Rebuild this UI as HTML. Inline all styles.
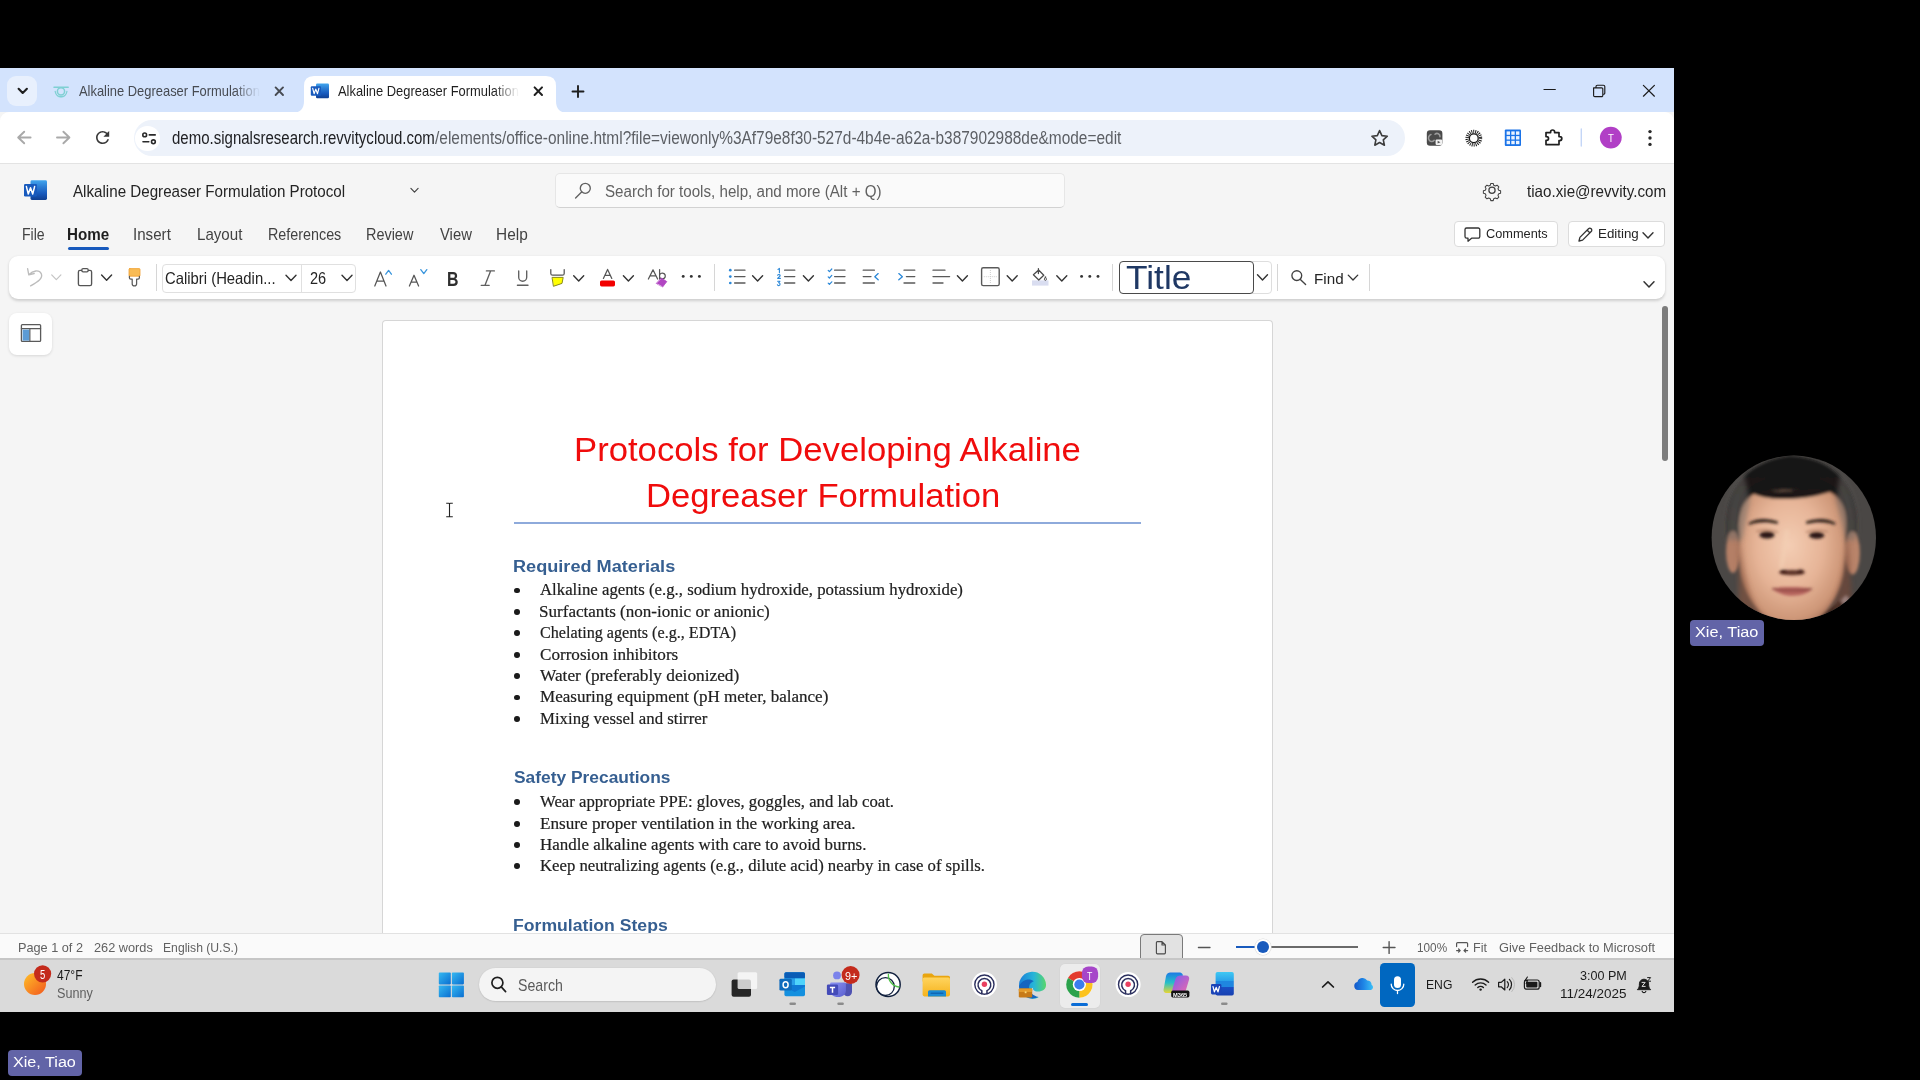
<!DOCTYPE html>
<html lang="en">
<head>
<meta charset="utf-8">
<title>Alkaline Degreaser Formulation Protocol</title>
<style>
html,body{margin:0;padding:0;background:#000;font-family:"Liberation Sans",sans-serif;}
body{width:1920px;height:1080px;overflow:hidden;font-family:"Liberation Sans",sans-serif;}
#root{position:relative;width:1920px;height:1080px;overflow:hidden;background:#000;}
.a{position:absolute;}
.t{position:absolute;white-space:nowrap;line-height:1;transform-origin:0 0;font-family:"Liberation Sans",sans-serif;}
svg{position:absolute;overflow:visible;}
.bul{position:absolute;width:5.8px;height:5.8px;border-radius:50%;background:#1a1a1a;left:514.3px;margin-top:.3px;}
.sep{position:absolute;width:1px;background:#d6d6d6;top:264px;height:27px;}
</style>
</head>
<body>
<div id="root">
<!-- ===== browser window backgrounds ===== -->
<div class="a" style="left:0;top:68px;width:1674px;height:944px;background:#f5f5f5;"></div>
<!-- tab strip -->
<div class="a" style="left:0;top:68px;width:1674px;height:44px;background:#d3e3fd;"></div>
<!-- toolbar -->
<div class="a" style="left:0;top:112px;width:1674px;height:51px;background:#fff;border-bottom:1px solid #e3e3e3;border-radius:9px 9px 0 0;"></div>
<!-- tab search button -->
<div class="a" style="left:7px;top:76px;width:30px;height:29.6px;border-radius:9px;background:#e8f0fd;"></div>
<!-- active tab -->
<svg style="left:292px;top:75px" width="276" height="38" viewBox="0 0 276 38"><path d="M0 38 C8 38 12 34 12 26 L12 11 Q12 1 22 1 L254 1 Q264 1 264 11 L264 26 C264 34 268 38 276 38 Z" fill="#fff"/></svg>
<!-- omnibox -->
<div class="a" style="left:134px;top:120px;width:1271px;height:36px;border-radius:18px;background:#edf2fa;"></div>
<div class="a" style="left:135px;top:126px;width:24.5px;height:24.5px;border-radius:50%;background:#fff;"></div>

<!-- ===== Word app ===== -->
<!-- search box -->
<div class="a" style="left:555px;top:172.5px;width:510px;height:35px;border-radius:5px;background:#fafafa;border:1px solid #e6e6e6;border-bottom-color:#d2d2d2;box-sizing:border-box;"></div>
<!-- Home underline -->
<div class="a" style="left:67.5px;top:246.5px;width:41.5px;height:3px;border-radius:1.5px;background:#185abd;"></div>
<!-- comments / editing buttons -->
<div class="a" style="left:1454px;top:221px;width:103.5px;height:25.5px;border-radius:4px;background:#fff;border:1px solid #dcdcdc;box-sizing:border-box;"></div>
<div class="a" style="left:1567.5px;top:221px;width:97.5px;height:25.5px;border-radius:4px;background:#fff;border:1px solid #dcdcdc;box-sizing:border-box;"></div>
<!-- ribbon -->
<div class="a" style="left:9px;top:256px;width:1656px;height:43px;border-radius:9px;background:#fff;box-shadow:0 1.5px 3px rgba(0,0,0,.16);"></div>
<!-- font combo -->
<div class="a" style="left:162px;top:263.5px;width:194px;height:29.5px;border-radius:4px;border:1px solid #e0e0e0;box-sizing:border-box;background:#fff;"></div>
<div class="a" style="left:300.5px;top:264px;width:1px;height:28.5px;background:#e0e0e0;"></div>
<!-- style box -->
<div class="a" style="left:1118.5px;top:261px;width:153px;height:33px;border-radius:4px;border:1px solid #dedede;box-sizing:border-box;background:#fff;"></div>
<div class="a" style="left:1118.5px;top:261px;width:135.5px;height:33px;border-radius:4px;border:1.6px solid #4a4a4a;box-sizing:border-box;background:#fff;"></div>
<div class="sep" style="left:156px"></div>
<div class="sep" style="left:714px"></div>
<div class="sep" style="left:1112px"></div>
<div class="sep" style="left:1277px"></div>
<div class="sep" style="left:1369px"></div>
<!-- side panel button -->
<div class="a" style="left:9px;top:312.5px;width:43px;height:42px;border-radius:8px;background:#fff;box-shadow:0 1px 3px rgba(0,0,0,.12);"></div>
<!-- page -->
<div class="a" style="left:382px;top:320px;width:891px;height:613px;background:#fff;border:1px solid #d6d6d6;border-bottom:none;border-radius:4px 4px 0 0;box-sizing:border-box;"></div>
<!-- title rule -->
<div class="a" style="left:513.5px;top:522.2px;width:627.5px;height:1.6px;background:#8eaadb;"></div>
<!-- scrollbar thumb -->
<div class="a" style="left:1661.5px;top:305.5px;width:6.5px;height:155px;border-radius:3.3px;background:#7d7d7d;"></div>
<!-- bullets -->
<div class="bul" style="top:587.3px"></div><div class="bul" style="top:608.7px"></div><div class="bul" style="top:630.1px"></div><div class="bul" style="top:651.5px"></div><div class="bul" style="top:672.9px"></div><div class="bul" style="top:694.3px"></div><div class="bul" style="top:715.7px"></div>
<div class="bul" style="top:798.8px"></div><div class="bul" style="top:820.6px"></div><div class="bul" style="top:841.7px"></div><div class="bul" style="top:862.9px"></div>
<!-- status bar -->
<div class="a" style="left:0;top:933px;width:1674px;height:26px;background:#fafafa;border-top:1px solid #e2e2e2;box-sizing:border-box;"></div>
<div class="a" style="left:1139.5px;top:934px;width:43.5px;height:26px;border-radius:4px 4px 0 0;background:#e2e2e2;border:1px solid #7a7a7a;box-sizing:border-box;"></div>
<!-- zoom slider -->
<div class="a" style="left:1235.5px;top:946.3px;width:28px;height:1.6px;background:#185abd;"></div>
<div class="a" style="left:1269px;top:946.2px;width:89px;height:1.8px;background:#6a6a6a;"></div>
<div class="a" style="left:1257px;top:941px;width:12px;height:12px;border-radius:50%;background:#185abd;box-shadow:0 0 0 2px #fff,0 0 0 2.6px #d8d8d8;"></div>
<!-- taskbar -->
<div class="a" style="left:0;top:958px;width:1674px;height:54px;background:#dadada;border-top:2px solid #c6c6c6;box-sizing:border-box;"></div>
<div class="a" style="left:478.5px;top:968px;width:237.5px;height:33px;border-radius:16.5px;background:#f4f4f4;box-shadow:0 0.5px 1.5px rgba(0,0,0,.18);"></div>
<div class="a" style="left:1059.5px;top:963.5px;width:40.5px;height:44.5px;border-radius:5px;background:#ececec;box-shadow:0 0 0 .5px #d2d2d2;"></div>
<div class="a" style="left:1071px;top:1002.5px;width:17px;height:3px;border-radius:1.5px;background:#0a6cd6;"></div>
<div class="a" style="left:1380px;top:963px;width:35px;height:43.5px;border-radius:4.5px;background:#0067c0;"></div>
<!-- name tags -->
<div class="a" style="left:1690px;top:620.3px;width:74px;height:25.5px;border-radius:4px;background:#6264a7;"></div>
<div class="a" style="left:8px;top:1050px;width:74px;height:25.5px;border-radius:4px;background:#6264a7;"></div>

<!-- ===== chrome icons ===== -->
<svg style="left:0;top:0" width="1920" height="170" viewBox="0 0 1920 170" fill="none" stroke-linecap="round" stroke-linejoin="round">
 <!-- tab search chevron -->
 <path d="M18.6 88.8 L22.7 93 L26.9 88.8" stroke="#1f1f1f" stroke-width="2.1"/>
 <!-- tab1 favicon (teal) -->
 <g stroke="#7fd0d3" stroke-width="1.5"><circle cx="61" cy="91.3" r="3.6"/><path d="M54 87.2 H68.2"/><path d="M55.2 91.5 A5.9 5.9 0 0 0 66.9 91.5" stroke-width="1.3"/><path d="M57 95.8 A6 6 0 0 0 65 95.8" stroke-width="1" opacity=".7"/></g>
 <!-- tab close buttons -->
 <path d="M275.6 87.4 L283 95 M283 87.4 L275.6 95" stroke="#474b52" stroke-width="1.9"/>
 <path d="M534.6 87.4 L542 95 M542 87.4 L534.6 95" stroke="#1f1f1f" stroke-width="2"/>
 <!-- new tab plus -->
 <path d="M572.5 91.5 H583.5 M578 86 V97" stroke="#1f1f1f" stroke-width="1.9"/>
 <!-- window controls -->
 <path d="M1544 89.5 H1555.3" stroke="#1b1b1b" stroke-width="1.2"/>
 <path d="M1593.6 87.8 h8 a1.2 1.2 0 0 1 1.2 1.2 v6.4 a1.2 1.2 0 0 1 -1.2 1.2 h-6.8 a1.2 1.2 0 0 1 -1.2 -1.2 z M1596 87.6 v-1 a1.4 1.4 0 0 1 1.4 -1.4 h6 a1.4 1.4 0 0 1 1.4 1.4 v6.4 a1.2 1.2 0 0 1 -1.2 1.2 h-0.8" stroke="#1b1b1b" stroke-width="1.15"/>
 <path d="M1643.4 85.4 L1654.4 96.2 M1654.4 85.4 L1643.4 96.2" stroke="#1b1b1b" stroke-width="1.2"/>
 <!-- back / forward -->
 <path d="M30.6 137.5 H18.4 M24.2 131.7 L18.2 137.5 L24.2 143.3" stroke="#a9a9a9" stroke-width="1.9"/>
 <path d="M57 137.5 H69.2 M63.4 131.7 L69.4 137.5 L63.4 143.3" stroke="#a9a9a9" stroke-width="1.9"/>
 <!-- reload -->
 <path transform="translate(92.7 127.6) scale(.825)" d="M17.65 6.35A7.958 7.958 0 0 0 12 4c-4.42 0-7.99 3.58-7.99 8s3.570 8 7.990 8c3.730 0 6.840-2.550 7.730-6h-2.080A5.990 5.990 0 0 1 12 18c-3.310 0-6-2.690-6-6s2.690-6 6-6c1.660 0 3.140.69 4.220 1.780L13 11h7V4l-2.350 2.350z" fill="#3a3a3a" stroke="none"/>
 <!-- site settings (tune) -->
 <g stroke="#2a2a2a" stroke-width="1.6"><circle cx="144.7" cy="134.9" r="1.9"/><path d="M149.3 134.9 H155.2"/><circle cx="153.4" cy="141.8" r="1.9"/><path d="M143 141.8 H148.8"/></g>
 <!-- star -->
 <path d="M1379.6 130.6 L1381.9 135.6 L1387.3 136.2 L1383.3 139.9 L1384.4 145.2 L1379.6 142.5 L1374.8 145.2 L1375.9 139.9 L1371.9 136.2 L1377.3 135.6 Z" stroke="#3c3c3c" stroke-width="1.6"/>
 <!-- ext 1 : dark rounded square -->
 <rect x="1426.8" y="130.3" width="15.6" height="15.4" rx="3.2" fill="#4a4a4a" stroke="none"/>
 <path d="M1431 134.5 a3.2 3.6 0 1 0 3.2 5.8 M1435 134.2 a3 3 0 0 1 5 2.5" stroke="#9b9b9b" stroke-width="1.5"/>
 <rect x="1435.6" y="139.4" width="6.6" height="5.6" rx="1.2" fill="#f2f2f2" stroke="none"/>
 <path d="M1437.6 140.8 L1440.4 142.2 L1437.6 143.6 Z" fill="#555" stroke="none"/>
 <!-- ext 2 : sunburst -->
 <circle cx="1473.8" cy="138.2" r="6.6" stroke="#161616" stroke-width="3.6" stroke-dasharray="0.9 1.0" stroke-linecap="butt"/>
 <circle cx="1473.8" cy="138.2" r="4.4" stroke="#161616" stroke-width="1.2"/>
 <!-- ext 3 : blue grid -->
 <rect x="1504.8" y="129.6" width="16.2" height="16.4" rx="1" fill="#1a73e8" stroke="none"/>
 <g fill="#eaf3ff" stroke="none"><rect x="1506.6" y="131.4" width="3.4" height="3.4"/><rect x="1511.3" y="131.4" width="3.4" height="3.4"/><rect x="1516" y="131.4" width="3.4" height="3.4"/><rect x="1506.6" y="136.1" width="3.4" height="3.4"/><rect x="1511.3" y="136.1" width="3.4" height="3.4"/><rect x="1516" y="136.1" width="3.4" height="3.4"/><rect x="1506.6" y="140.8" width="3.4" height="3.4"/><rect x="1511.3" y="140.8" width="3.4" height="3.4"/><rect x="1516" y="140.8" width="3.4" height="3.4"/></g>
 <!-- puzzle -->
 <path d="M1546 132.6 h4.6 v-0.6 a2 2 0 0 1 4 0 v0.6 h4.4 v4 h0.8 a2 2 0 0 1 0 4 h-0.8 v4 h-13 v-4.2 h0.6 a1.9 1.9 0 0 0 0 -3.8 h-0.6 z" stroke="#1f1f1f" stroke-width="1.7"/>
 <!-- divider -->
 <path d="M1581.3 129 V146" stroke="#c4d6f7" stroke-width="1.4"/>
 <!-- profile -->
 <circle cx="1610.8" cy="137.6" r="10.9" fill="#b13fc6" stroke="none"/>
 <!-- kebab -->
 <g fill="#2a2a2a" stroke="none"><circle cx="1650" cy="131.6" r="1.7"/><circle cx="1650" cy="138" r="1.7"/><circle cx="1650" cy="144.4" r="1.7"/></g>
</svg>

<!-- ===== word header + ribbon icons ===== -->
<svg style="left:0;top:0" width="1920" height="360" viewBox="0 0 1920 360" fill="none" stroke-linecap="round" stroke-linejoin="round">
 <defs>
  <path id="chv" d="M-5 -2.6 L0 2.6 L5 -2.6"/>
  <linearGradient id="wg" x1="0" y1="0" x2="0" y2="1"><stop offset="0" stop-color="#41a5ee"/><stop offset=".34" stop-color="#2b7cd3"/><stop offset=".67" stop-color="#185abd"/><stop offset="1" stop-color="#103f91"/></linearGradient>
 </defs>
 <!-- Word logo (header) -->
 <g stroke="none">
  <rect x="30.5" y="180.3" width="16.5" height="19.6" rx="1.4" fill="url(#wg)"/>
  <rect x="24" y="184" width="13" height="12.6" rx="1.3" fill="#185abd"/>
  <path d="M26.4 186.6 l1.9 7.4 l2.2 -6.2 l2.2 6.2 l1.9 -7.4" stroke="#fff" stroke-width="1.5" fill="none"/>
 </g>
 <!-- Word logo (tab favicon) -->
 <g stroke="none">
  <rect x="316" y="83.5" width="13" height="14.8" rx="1.2" fill="url(#wg)"/>
  <rect x="310.8" y="86.2" width="10.2" height="9.6" rx="1" fill="#185abd"/>
  <path d="M312.7 88.3 l1.4 5.4 l1.7 -4.6 l1.7 4.6 l1.4 -5.4" stroke="#fff" stroke-width="1.15" fill="none"/>
 </g>
 <!-- title chevron -->
 <g transform="translate(414.5 190.3) scale(.72)" stroke="#424242" stroke-width="1.6"><path d="M-5 -2.6 L0 2.6 L5 -2.6"/></g>
 <!-- search magnifier -->
 <g stroke="#616161" stroke-width="1.35"><circle cx="585.3" cy="188.3" r="5"/><path d="M581.6 192 L575.6 198"/></g>
 <!-- gear -->
 <g stroke="#424242" stroke-width="1.25">
  <circle cx="1492" cy="190.3" r="3.1"/>
  <path d="M1490.5 181.9 h3 l.6 2.3 l1.9 .9 l2.2 -1 l2.1 2.1 l-1 2.2 l.9 1.9 l2.3 .6 v3 l-2.3 .6 l-.9 1.9 l1 2.2 l-2.1 2.1 l-2.2 -1 l-1.9 .9 l-.6 2.3 h-3 l-.6 -2.3 l-1.9 -.9 l-2.2 1 l-2.1 -2.1 l1 -2.2 l-.9 -1.9 l-2.3 -.6 v-3 l2.3 -.6 l.9 -1.9 l-1 -2.2 l2.1 -2.1 l2.2 1 l1.9 -.9 z" transform="translate(1492 190.3) scale(.82) translate(-1492 -190.3)"/>
 </g>
 <!-- comments icon -->
 <path d="M1466.6 228 h11.6 a1.6 1.6 0 0 1 1.6 1.6 v7 a1.6 1.6 0 0 1 -1.6 1.6 h-6.6 l-3.6 3 v-3 h-1.4 a1.6 1.6 0 0 1 -1.6 -1.6 v-7 a1.6 1.6 0 0 1 1.6 -1.6 z" stroke="#333" stroke-width="1.3"/>
 <!-- pencil -->
 <path d="M1579 241 l.9 -3.6 l8.6 -8.6 a1.9 1.9 0 0 1 2.7 2.7 l-8.6 8.6 z M1587.2 230.2 l2.6 2.6" stroke="#333" stroke-width="1.3"/>
 <g transform="translate(1648 235.3)" stroke="#333" stroke-width="1.4"><path d="M-5 -2.6 L0 2.6 L5 -2.6"/></g>
 <!-- ribbon collapse chevron -->
 <g transform="translate(1649 284.3)" stroke="#333" stroke-width="1.5"><path d="M-5 -2.6 L0 2.6 L5 -2.6"/></g>

 <!-- undo (disabled) -->
 <path d="M27.6 268.6 L28.8 274.8 L34.2 273.5 M28.8 274.8 C33 270.3 39.2 269.4 41.3 273.8 C43.2 278.4 38 281.6 30.6 285.8" stroke="#bcbcbc" stroke-width="1.35"/>
 <g transform="translate(56.3 277.2) scale(.92)" stroke="#c4c4c4" stroke-width="1.3"><path d="M-5 -2.6 L0 2.6 L5 -2.6"/></g>
 <!-- clipboard -->
 <path d="M81.6 270.4 h-1.6 a1.6 1.6 0 0 0 -1.6 1.6 v12 a1.6 1.6 0 0 0 1.6 1.6 h10 a1.6 1.6 0 0 0 1.6 -1.6 v-12 a1.6 1.6 0 0 0 -1.6 -1.6 h-1.6" stroke="#555" stroke-width="1.35"/>
 <rect x="81.8" y="268.6" width="6.4" height="3.2" rx="1.3" stroke="#555" stroke-width="1.25"/>
 <g transform="translate(106.6 277.6)" stroke="#333" stroke-width="1.4"><path d="M-5 -2.6 L0 2.6 L5 -2.6"/></g>
 <!-- format painter -->
 <rect x="129" y="268.6" width="11" height="7.6" rx=".8" fill="#f8bb55" stroke="#f0a030" stroke-width=".8"/>
 <path d="M129.4 276.4 v1.4 a1.4 1.4 0 0 0 1.4 1.4 h1.4 v4.6 a2.2 2.2 0 0 0 4.4 0 v-4.6 h1.4 a1.4 1.4 0 0 0 1.4 -1.4 v-1.4" stroke="#5a5a5a" stroke-width="1.25"/>
 <!-- combo chevrons -->
 <g transform="translate(291 277.8)" stroke="#333" stroke-width="1.4"><path d="M-5 -2.6 L0 2.6 L5 -2.6"/></g>
 <g transform="translate(347 277.8)" stroke="#333" stroke-width="1.4"><path d="M-5 -2.6 L0 2.6 L5 -2.6"/></g>
 <!-- grow / shrink font -->
 <path d="M374.8 286 L380.4 272 L386 286 M376.8 281.2 H384" stroke="#555" stroke-width="1.25"/>
 <path d="M385.8 274.2 L388.6 270.4 L391.4 274.2" stroke="#3a96dd" stroke-width="1.3"/>
 <path d="M409.4 286 L414 275.2 L418.6 286 M411 282.2 H417" stroke="#555" stroke-width="1.25"/>
 <path d="M420.8 269.6 L423.8 273.6 L426.8 269.6" stroke="#3a96dd" stroke-width="1.3"/>
 <!-- italic -->
 <path d="M486.4 270.9 H494.4 M481.2 285.3 H489.2 M490.6 270.9 L485 285.3" stroke="#5f5f5f" stroke-width="1.35"/>
 <!-- underline -->
 <path d="M518.7 271 V277.2 A4 4 0 0 0 526.7 277.2 V271 M517.4 285.2 H528" stroke="#5f5f5f" stroke-width="1.35"/>
 <!-- highlighter -->
 <path d="M550.8 269.6 V273.4 A1.8 1.8 0 0 0 552.6 275.2 H562.4 A1.8 1.8 0 0 0 564.2 273.4 V269.6" stroke="#555" stroke-width="1.25"/>
 <path d="M552.4 277.4 H563.2 L562 283.4 L553.8 286.2 Z" fill="#ffff00" stroke="#8a8a1e" stroke-width="1"/>
 <g transform="translate(578.7 278.4)" stroke="#333" stroke-width="1.4"><path d="M-5 -2.6 L0 2.6 L5 -2.6"/></g>
 <!-- font colour -->
 <path d="M603.4 278.4 L607.6 269.4 L611.8 278.4 M604.8 275.4 H610.4" stroke="#555" stroke-width="1.25"/>
 <rect x="600" y="280.4" width="15" height="6" rx="1.6" fill="#f20000" stroke="none"/>
 <g transform="translate(628.4 278.4)" stroke="#333" stroke-width="1.4"><path d="M-5 -2.6 L0 2.6 L5 -2.6"/></g>
 <!-- clear formatting -->
 <path d="M648.4 279 L653 269.8 L657.6 279 M650 275.8 H656" stroke="#555" stroke-width="1.25"/>
 <path d="M659.6 269.6 V279 M659.6 275.2 A2.9 2.9 0 1 1 659.6 276.8" stroke="#555" stroke-width="1.25"/>
 <path d="M661.6 278.2 L666.8 281.6 L662.6 287 L656.6 283.6 Z" fill="#b146c2" stroke="#b146c2" stroke-width=".8"/>
 <path d="M657.8 284.2 L662 286.6" stroke="#e9c7ef" stroke-width=".8"/>
 <!-- more dots -->
 <g fill="#333" stroke="none"><circle cx="683.2" cy="276.4" r="1.45"/><circle cx="691.3" cy="276.4" r="1.45"/><circle cx="699.4" cy="276.4" r="1.45"/>
 <circle cx="1081.6" cy="276.4" r="1.45"/><circle cx="1089.8" cy="276.4" r="1.45"/><circle cx="1098" cy="276.4" r="1.45"/></g>
 <!-- bullets -->
 <g fill="#2b88d8" stroke="none"><circle cx="730.3" cy="270.2" r="1.35"/><circle cx="730.3" cy="276.6" r="1.35"/><circle cx="730.3" cy="283" r="1.35"/></g>
 <path d="M734.6 270.2 H745 M734.6 276.6 H745 M734.6 283 H745" stroke="#5a5a5a" stroke-width="1.3"/>
 <g transform="translate(757.6 278.4)" stroke="#333" stroke-width="1.4"><path d="M-5 -2.6 L0 2.6 L5 -2.6"/></g>
 <!-- numbering -->
 <g stroke="#2b88d8" stroke-width="1.1"><path d="M778 269.4 l1.4 -1 v4.4"/><path d="M777.6 275.2 a1.4 1.3 0 0 1 2.6 .6 l-2.6 2.6 h2.8"/><path d="M777.6 281.2 h2.4 l-1.4 1.6 a1.4 1.4 0 1 1 -1.2 2"/></g>
 <path d="M784.6 270.2 H794.8 M784.6 276.6 H794.8 M784.6 283 H794.8" stroke="#5a5a5a" stroke-width="1.3"/>
 <g transform="translate(808.4 278.4)" stroke="#333" stroke-width="1.4"><path d="M-5 -2.6 L0 2.6 L5 -2.6"/></g>
 <!-- checklist -->
 <g stroke="#2b88d8" stroke-width="1.2"><path d="M828.2 270.4 l1.2 1.2 l2.4 -2.6"/><path d="M828.2 276.8 l1.2 1.2 l2.4 -2.6"/><path d="M828.2 283.2 l1.2 1.2 l2.4 -2.6"/></g>
 <path d="M834.6 270.2 H845 M834.6 276.6 H845 M834.6 283 H845" stroke="#5a5a5a" stroke-width="1.3"/>
 <!-- outdent -->
 <path d="M863.2 270.2 H874.4 M863.2 276.6 H871 M863.2 283 H874.4" stroke="#5a5a5a" stroke-width="1.3"/>
 <path d="M878.2 273.6 L874.8 276.7 L878.2 279.8" stroke="#2b88d8" stroke-width="1.3"/>
 <!-- indent -->
 <path d="M904 270.2 H914.8 M906.4 276.6 H914.8 M904 283 H914.8" stroke="#5a5a5a" stroke-width="1.3"/>
 <path d="M898.8 273.6 L902.4 276.7 L898.8 279.8" stroke="#2b88d8" stroke-width="1.3"/>
 <!-- align -->
 <path d="M933 270.2 H945 M933 276.6 H949.6 M933 283 H943" stroke="#5a5a5a" stroke-width="1.3"/>
 <g transform="translate(962.4 278.4)" stroke="#333" stroke-width="1.4"><path d="M-5 -2.6 L0 2.6 L5 -2.6"/></g>
 <!-- borders -->
 <rect x="981.6" y="267.8" width="17.6" height="17.8" rx="1.6" stroke="#5a5a5a" stroke-width="1.4"/>
 <path d="M990.4 270 V283.6 M983.8 276.7 H997" stroke="#c9c9c9" stroke-width=".9" stroke-dasharray="1 1" stroke-linecap="butt"/>
 <g transform="translate(1012.2 278.4)" stroke="#333" stroke-width="1.4"><path d="M-5 -2.6 L0 2.6 L5 -2.6"/></g>
 <!-- shading -->
 <rect x="1032" y="280.4" width="16.5" height="5.2" fill="#d9ddf0" stroke="none"/>
 <path d="M1038.6 270 L1043.8 275.2 L1038.8 280 L1033.4 274.8 Z M1038.4 268.6 V273.6" stroke="#4a4a4a" stroke-width="1.25"/>
 <path d="M1045.4 277 c1.4 1.8 1.4 3.2 0 3.4 c-1.4 -.2 -1.4 -1.6 0 -3.4 z" stroke="#4a4a4a" stroke-width="1"/>
 <g transform="translate(1061.8 278.4)" stroke="#333" stroke-width="1.4"><path d="M-5 -2.6 L0 2.6 L5 -2.6"/></g>
 <!-- style dropdown chevron -->
 <g transform="translate(1262.5 277.4)" stroke="#333" stroke-width="1.4"><path d="M-5 -2.6 L0 2.6 L5 -2.6"/></g>
 <!-- find -->
 <g stroke="#424242" stroke-width="1.35"><circle cx="1296.8" cy="275.6" r="4.9"/><path d="M1300.4 279.4 L1305.6 284.6"/></g>
 <g transform="translate(1353 277.6) scale(.95)" stroke="#333" stroke-width="1.4"><path d="M-5 -2.6 L0 2.6 L5 -2.6"/></g>
 <!-- nav pane icon -->
 <rect x="21.4" y="324.6" width="19.2" height="16.8" rx="1" stroke="#5a5a5a" stroke-width="1.3"/>
 <path d="M21.4 328.6 H40.6" stroke="#5a5a5a" stroke-width="1.2"/>
 <rect x="22.6" y="329.6" width="7" height="11" fill="#5b9bd5" stroke="none"/>
 <path d="M29.9 328.8 V341.2" stroke="#5a5a5a" stroke-width="1.1"/>
</svg>

<!-- ===== status bar + taskbar icons ===== -->
<svg style="left:0;top:920px" width="1920" height="100" viewBox="0 920 1920 100" fill="none" stroke-linecap="round" stroke-linejoin="round">
 <defs>
  <linearGradient id="sun" x1="0" y1="0" x2="1" y2="1"><stop offset="0" stop-color="#ffc028"/><stop offset="1" stop-color="#f2561e"/></linearGradient>
  <linearGradient id="win" x1="0" y1="0" x2="1" y2="1"><stop offset="0" stop-color="#35b8f1"/><stop offset="1" stop-color="#0a6ed1"/></linearGradient>
  <linearGradient id="fold" x1="0" y1="0" x2="0" y2="1"><stop offset="0" stop-color="#ffd45e"/><stop offset="1" stop-color="#f5b21c"/></linearGradient>
  <linearGradient id="od" x1="0" y1="0" x2="1" y2="0"><stop offset="0" stop-color="#1256c8"/><stop offset=".5" stop-color="#1f86e6"/><stop offset="1" stop-color="#3cc0f7"/></linearGradient>
  <linearGradient id="edg" x1="0" y1="0" x2="1" y2="0"><stop offset="0" stop-color="#1a7fd8"/><stop offset=".55" stop-color="#27b5d8"/><stop offset="1" stop-color="#59d66a"/></linearGradient>
  <linearGradient id="cop1" x1="0" y1="0" x2="0" y2="1"><stop offset="0" stop-color="#1d7ae5"/><stop offset=".5" stop-color="#27c0c8"/><stop offset="1" stop-color="#e9d532"/></linearGradient>
  <linearGradient id="cop2" x1="0" y1="0" x2="1" y2="1"><stop offset="0" stop-color="#7a5cf0"/><stop offset="1" stop-color="#f06aa8"/></linearGradient>
  <linearGradient id="wd" x1="0" y1="0" x2="0" y2="1"><stop offset="0" stop-color="#3fc9f3"/><stop offset=".36" stop-color="#2aa3ea"/><stop offset=".37" stop-color="#1f86e0"/><stop offset=".64" stop-color="#1f86e0"/><stop offset=".65" stop-color="#1a4fc4"/><stop offset="1" stop-color="#173fb0"/></linearGradient>
  <linearGradient id="tm" x1="0" y1="0" x2="1" y2="1"><stop offset="0" stop-color="#8b93f2"/><stop offset="1" stop-color="#5a5fd0"/></linearGradient>
  <g id="tgt"><circle r="12.5" fill="#fff"/><circle r="9.6" stroke="#2b2f5e" stroke-width="1.4"/><path d="M-2.6 6.1 A6.4 6.4 0 1 1 2.6 6.1 V9.2 M-2.6 6.1 V9.2" stroke="#2b2f5e" stroke-width="1.6"/><circle cy="-.3" r="2.7" fill="#e9405f"/></g>
  <rect id="ind" width="6.6" height="2.6" rx="1.3" fill="#8b8b8b"/>
 </defs>
 <!-- page view icon -->
 <path d="M1157.4 941.6 h4.6 l3.4 3.4 v7.8 a1 1 0 0 1 -1 1 h-7 a1 1 0 0 1 -1 -1 v-10.2 a1 1 0 0 1 1 -1 z M1162 941.8 v3.2 h3.2" stroke="#4a4a4a" stroke-width="1.15"/>
 <!-- minus / plus -->
 <path d="M1198.4 947.5 H1210" stroke="#555" stroke-width="1.3"/>
 <path d="M1383.2 947.5 H1395 M1389.1 941.6 V953.4" stroke="#555" stroke-width="1.4"/>
 <!-- fit icon -->
 <path d="M1456.6 946.6 v-3 a1 1 0 0 1 1 -1 h9 a1 1 0 0 1 1 1 v3 M1456.6 950.6 h3.6 m-1.6 -1.6 l1.6 1.6 l-1.6 1.6 M1467.6 950.6 h-3.6 m1.6 -1.6 l-1.6 1.6 l1.6 1.6" stroke="#555" stroke-width="1.2"/>
 <!-- weather -->
 <circle cx="35" cy="984" r="11" fill="url(#sun)"/>
 <circle cx="42.6" cy="973.8" r="8.6" fill="#c42b1c"/>
 <!-- windows logo -->
 <g fill="url(#win)"><rect x="438.8" y="972.6" width="12" height="11.8" rx=".8"/><rect x="451.9" y="972.6" width="12" height="11.8" rx=".8"/><rect x="438.8" y="985.5" width="12" height="11.8" rx=".8"/><rect x="451.9" y="985.5" width="12" height="11.8" rx=".8"/></g>
 <!-- search magnifier -->
 <g stroke="#1f1f1f" stroke-width="1.7"><circle cx="497.4" cy="982.8" r="5.5"/><path d="M501.5 987.1 L505.6 991.6"/></g>
 <!-- task view -->
 <rect x="731.6" y="979.4" width="19.4" height="17.4" rx="2" fill="#262626"/>
 <rect x="737.6" y="972.2" width="19.6" height="16.8" rx="1.6" fill="#fbfbfb" fill-opacity=".78"/>
 <!-- outlook -->
 <rect x="784.4" y="972.2" width="20.6" height="24" rx="1.6" fill="#1490df"/>
 <rect x="784.4" y="972.2" width="20.6" height="6.2" rx="1.6" fill="#0a5cb5"/>
 <path d="M794.8 978.4 h10.2 v6.6 h-10.2 z" fill="#4fd3fb"/><path d="M784.4 978.4 h10.4 v6.6 h-10.4 z" fill="#2a9fea"/>
 <path d="M784.4 985 h20.6 v1.6 l-10.3 5.4 l-10.3 -5.4 z" fill="#0f78d4"/>
 <rect x="779.4" y="978.8" width="12.4" height="11.8" rx="1.4" fill="#0f6cbd"/>
 <ellipse cx="785.6" cy="984.7" rx="2.5" ry="3" stroke="#fff" stroke-width="1.5"/>
 <g transform="translate(789.4 1002.4)"><rect width="6.6" height="2.6" rx="1.3" fill="#8b8b8b"/></g>
 <!-- teams -->
 <circle cx="848" cy="978.6" r="3" fill="#5359c8"/>
 <path d="M843 983.2 h9 v8.6 a4.4 4.4 0 0 1 -8.8 0 z" fill="#4f52b2"/>
 <circle cx="837" cy="975.4" r="3.9" fill="#7b83eb"/>
 <path d="M831.3 982.5 h13.4 a1.2 1.2 0 0 1 1.2 1.2 v7 a6.2 6.2 0 0 1 -6.2 6.2 h-3.4 a6.2 6.2 0 0 1 -6.2 -6.2 v-7 a1.2 1.2 0 0 1 1.2 -1.2 z" fill="url(#tm)"/>
 <rect x="826.9" y="984.4" width="11.2" height="10.6" rx="1.3" fill="#444bb8"/>
 <path d="M829.9 987.4 h5.2 M832.5 987.4 v5.4" stroke="#fff" stroke-width="1.5" stroke-linecap="butt"/>
 <circle cx="850.6" cy="975" r="9" fill="#c42b1c"/>
 <g transform="translate(837.3 1002.4)"><rect width="6.6" height="2.6" rx="1.3" fill="#8b8b8b"/></g>
 <!-- ring app -->
 <circle cx="888.1" cy="984.5" r="12.1" fill="#fff" stroke="#13223f" stroke-width="1.5"/>
 <circle cx="885.4" cy="986.6" r="8.9" stroke="#13223f" stroke-width="1.3"/>
 <path d="M888.4 974.2 A12 12 0 0 0 899 987" stroke="#52c24a" stroke-width="1.3"/>
 <!-- folder -->
 <path d="M922.6 975.2 a1.8 1.8 0 0 1 1.8 -1.8 h7.4 l2.6 2.4 h13.8 a1.8 1.8 0 0 1 1.8 1.8 v4 h-27.4 z" fill="#e9a50f"/>
 <rect x="922.6" y="977.6" width="27.4" height="18.8" rx="1.8" fill="url(#fold)"/>
 <path d="M928 996.4 v-4.6 a1.6 1.6 0 0 1 1.6 -1.6 h14.8 a1.6 1.6 0 0 1 1.6 1.6 v4.6 z" fill="#1a8ad4"/>
 <rect x="930.4" y="992.4" width="13.2" height="1.6" rx=".8" fill="#0f66b4"/>
 <!-- target apps -->
 <g transform="translate(984.4 984.6)"><circle r="12.5" fill="#fff"/><circle r="9.6" stroke="#2b2f5e" stroke-width="1.4"/><path d="M-2.6 6.1 A6.4 6.4 0 1 1 2.6 6.1 V9.2 M-2.6 6.1 V9.2" stroke="#2b2f5e" stroke-width="1.6"/><circle cy="-.3" r="2.7" fill="#e9405f"/></g>
 <g transform="translate(1128.1 984.6)"><circle r="12.5" fill="#fff"/><circle r="9.6" stroke="#2b2f5e" stroke-width="1.4"/><path d="M-2.6 6.1 A6.4 6.4 0 1 1 2.6 6.1 V9.2 M-2.6 6.1 V9.2" stroke="#2b2f5e" stroke-width="1.6"/><circle cy="-.3" r="2.7" fill="#e9405f"/></g>
 <!-- edge -->
 <path d="M1019 986 a13.4 13.4 0 0 1 27 -1.4 c.4 4.6 -3.4 7 -8 7 c-4 0 -5.6 -2 -4.8 -4 c-4.8 2.6 -4.2 10 5.6 9.6 a13.6 13.6 0 0 1 -19.8 -11.2 z" fill="url(#edg)"/>
 <path d="M1019 986.4 c2.6 -6.4 10 -8.6 14.8 -5.2 c-3.4 1.2 -5.2 4 -4.6 7.2 c.6 3.6 3.2 7 9.4 8.6 a13.6 13.6 0 0 1 -19.6 -10.6 z" fill="#1565c0"/>
 <rect x="1018.8" y="988.4" width="13.4" height="9" rx="1.2" fill="#c77a17"/><rect x="1018.8" y="988.4" width="13.4" height="3.6" rx="1.2" fill="#e39a2a"/><rect x="1024.7" y="991.4" width="1.8" height="1.8" fill="#fbd977"/>
 <!-- chrome -->
 <g transform="translate(1079.4 984.5)">
  <circle r="13.2" fill="#fff"/>
  <path d="M0 0 L-11.43 -6.6 A13.2 13.2 0 0 1 11.43 -6.6 Z" fill="#e33b2e"/>
  <path d="M0 0 L11.43 -6.6 A13.2 13.2 0 0 1 0 13.2 Z" fill="#fcc31e"/>
  <path d="M0 0 L0 13.2 A13.2 13.2 0 0 1 -11.43 -6.6 Z" fill="#2ba24c"/>
  <circle r="6.6" fill="#fff"/><circle r="5.1" fill="#3b7ded"/>
 </g>
 <rect x="1081.9" y="966.4" width="16.2" height="16.6" rx="6.4" fill="#a646c9"/>
 <!-- M365 copilot -->
 <path d="M1166 976 c1 -3 3 -3.4 6 -3.4 h7 c3 0 4.4 1.6 3.6 4.4 l-3.6 12 c-1 3 -3 4 -6 4 h-6 c-3 0 -4 -2 -3.2 -4.6 z" fill="url(#cop1)"/>
 <path d="M1175.4 979 c1 -2.6 2.6 -3.6 5.4 -3.6 h5 c2.8 0 4 1.8 3.2 4.4 l-3 10 c-.8 2.6 -2.6 3.8 -5.4 3.8 h-5.4 c-2.8 0 -3.6 -1.8 -2.8 -4.4 z" fill="url(#cop2)"/>
 <rect x="1171.2" y="990.6" width="18.2" height="6.8" rx="1.6" fill="#111"/>
 <!-- word -->
 <rect x="1215.6" y="972" width="18.2" height="23.6" rx="1.8" fill="url(#wd)"/>
 <rect x="1211" y="984" width="10.4" height="10.4" rx="1.3" fill="#1b44b8"/>
 <path d="M1213 986.6 l1.4 5.2 l1.8 -4.4 l1.8 4.4 l1.4 -5.2" stroke="#fff" stroke-width="1.25"/>
 <g transform="translate(1221 1002.4)"><rect width="6.6" height="2.6" rx="1.3" fill="#8b8b8b"/></g>
 <!-- tray chevron -->
 <path d="M1322.6 987 L1328 981.8 L1333.4 987" stroke="#1b1b1b" stroke-width="1.7"/>
 <!-- onedrive -->
 <path d="M1358 990 a4 4 0 0 1 -.6 -7.9 a5.4 5.4 0 0 1 9.8 -1.7 a4.3 4.3 0 0 1 4.4 4.3 a2.9 2.9 0 0 1 -.6 5.3 z" fill="url(#od)"/>
 <!-- mic -->
 <rect x="1394" y="976.2" width="7" height="11.8" rx="3.5" fill="#fff"/>
 <path d="M1391.2 984.2 a6.3 6.3 0 0 0 12.6 0 M1397.5 990.6 v3" stroke="#fff" stroke-width="1.3"/>
 <!-- wifi -->
 <g stroke="#1b1b1b" stroke-width="1.4"><path d="M1472.6 982.2 a11.6 11.6 0 0 1 16 0"/><path d="M1475.2 985 a7.8 7.8 0 0 1 10.8 0"/><path d="M1477.8 987.6 a4 4 0 0 1 5.6 0"/></g><circle cx="1480.6" cy="989.6" r="1.2" fill="#1b1b1b"/>
 <!-- volume -->
 <path d="M1498.6 982.4 h2.6 l3.6 -3.2 v10.8 l-3.6 -3.2 h-2.6 z" stroke="#1b1b1b" stroke-width="1.2"/>
 <path d="M1507.2 981.6 a4.2 4.2 0 0 1 0 6 M1509.4 979.4 a7.4 7.4 0 0 1 0 10.4" stroke="#1b1b1b" stroke-width="1.2"/>
 <path d="M1511.8 977.6 a10 10 0 0 1 0 14" stroke="#b9b9b9" stroke-width="1"/>
 <!-- battery -->
 <rect x="1524.4" y="980" width="14.8" height="9.2" rx="2" stroke="#1b1b1b" stroke-width="1.2"/><rect x="1526.2" y="981.8" width="11.2" height="5.6" rx=".8" fill="#1b1b1b"/>
 <path d="M1540.4 982.8 v3.6" stroke="#1b1b1b" stroke-width="1.6"/>
 <path d="M1527.4 977 l-2.4 3.6 h2.6 l-1.4 3" stroke="#1b1b1b" stroke-width="1.1"/>
 <!-- bell (dnd) -->
 <path d="M1637.6 989.4 c1.6 -1.4 1.8 -3 1.8 -5.6 a4.6 4.6 0 0 1 9.2 0 c0 2.6 .2 4.200 1.800 5.600 z" fill="#1b1b1b" stroke="#1b1b1b" stroke-width="1"/>
 <path d="M1642.2 991.4 a1.9 1.9 0 0 0 3.6 0" stroke="#1b1b1b" stroke-width="1.2"/>
 <path d="M1642 982.4 h3.200 l-3.200 4 h3.200" stroke="#dedede" stroke-width="1"/>
 <path d="M1647.6 977.6 h3 l-3 3.600 h3" stroke="#1b1b1b" stroke-width="1"/>
</svg>

<!-- ===== participant avatar (abstract approximation) ===== -->
<svg style="left:1700px;top:445px" width="190" height="185" viewBox="1700 445 190 185">
 <defs>
  <clipPath id="avc"><circle cx="1793.8" cy="537.8" r="82.2"/></clipPath>
  <filter id="b1" x="-20%" y="-20%" width="140%" height="140%"><feGaussianBlur stdDeviation="1.6"/></filter>
  <filter id="b2" x="-30%" y="-30%" width="160%" height="160%"><feGaussianBlur stdDeviation="2.6"/></filter>
  <radialGradient id="skin" cx=".47" cy=".42" r=".62"><stop offset="0" stop-color="#f4cdb3"/><stop offset=".5" stop-color="#e6b497"/><stop offset=".82" stop-color="#cd9677"/><stop offset="1" stop-color="#9a6650"/></radialGradient>
  <linearGradient id="hairg" x1="0" y1="0" x2="0" y2="1"><stop offset="0" stop-color="#151413"/><stop offset="1" stop-color="#262321"/></linearGradient>
 </defs>
 <g clip-path="url(#avc)">
  <rect x="1700" y="445" width="190" height="185" fill="#4a4745"/>
  <g filter="url(#b1)">
   <!-- clothing -->
   <path d="M1800 632 L1846 596 L1880 610 L1880 640 Z" fill="#0c0c0d"/>
   <path d="M1841 600 l5 -5 l3 4 l-5 6 z" fill="#c9d3e2"/>
   <path d="M1700 640 L1735 600 L1760 612 L1775 640 Z" fill="#3a3735"/>
   <!-- hair mass -->
   <path d="M1727 540 C1722 500 1738 462 1790 456 C1842 458 1862 496 1856 540 L1846 540 L1842 500 L1744 500 L1739 540 Z" fill="url(#hairg)"/>
   <!-- ears -->
   <ellipse cx="1733" cy="552" rx="7" ry="21" fill="#b47f66"/>
   <ellipse cx="1852.5" cy="553" rx="7.4" ry="21.5" fill="#b9846a"/>
   <!-- face -->
   <path d="M1739 520 C1739 494 1760 484 1792 484 C1826 484 1846 494 1846 522 L1845 566 C1843 596 1822 626 1792 630 C1764 626 1742 598 1740 566 Z" fill="url(#skin)"/>
   <!-- hairline over forehead -->
   <path d="M1736 524 C1736 500 1742 488 1756 484 C1768 496 1800 492 1826 480 C1840 484 1849 498 1848 524 C1846 506 1838 496 1830 492 C1806 500 1772 502 1754 494 C1744 500 1740 510 1739 524 Z" fill="#1b1918"/>
   <path d="M1742 498 C1752 470 1830 468 1844 498 C1830 486 1810 490 1792 490 C1772 492 1754 488 1742 498 Z" fill="#191716"/>
  </g>
  <g filter="url(#b1)">
   <!-- brows -->
   <path d="M1748.600 523 C1756 517.800 1768 518 1778 521.500 L1777.500 524 C1768 521.500 1757 521.500 1749 525 Z" fill="#2c1f19"/>
   <path d="M1806 521.500 C1816 518 1828 517.800 1835.500 523 L1835 525 C1827 521.500 1816 521.500 1806.500 524 Z" fill="#2c1f19"/>
   <!-- eyes -->
   <ellipse cx="1767" cy="535" rx="7.6" ry="3.4" fill="#2a1712"/>
   <ellipse cx="1816.7" cy="535.4" rx="7.6" ry="3.4" fill="#2a1712"/>
   <path d="M1756 531.600 Q1767 527.800 1778 532.400" stroke="#a8745a" stroke-width="1.200" fill="none"/>
   <path d="M1806 532.400 Q1817 528.200 1828 532" stroke="#a8745a" stroke-width="1.200" fill="none"/>
   <!-- nose -->
   <ellipse cx="1792" cy="572.6" rx="13" ry="2.6" fill="#5a3025"/><ellipse cx="1783.5" cy="571.6" rx="3.4" ry="2" fill="#3e1f18"/><ellipse cx="1800.5" cy="571.6" rx="3.4" ry="2" fill="#3e1f18"/>
   <path d="M1787 530 C1785 548 1783 560 1781 568" stroke="#f3cfb4" stroke-width="5" fill="none" opacity=".55"/>
   <!-- mouth -->
   <path d="M1772 588.500 C1782 586.500 1802 586.500 1812 589 C1804 598 1782 598 1772 588.500 Z" fill="#b4625c"/>
   <path d="M1772 588.700 Q1792 592 1812 589" stroke="#7a3a36" stroke-width="1.300" fill="none"/>
  </g>
  <!-- side shading -->
  <g filter="url(#b2)" opacity=".6"><path d="M1739 520 C1742 596 1760 622 1784 630 L1738 636 Z" fill="#8a5641"/><path d="M1847 520 C1846 590 1832 614 1814 626 L1854 632 Z" fill="#7a4a38"/></g>
  <g filter="url(#b2)" opacity=".5"><path d="M1727 540 C1724 510 1730 486 1744 474 L1750 500 L1742 540 Z" fill="#6d6a68"/><path d="M1856 540 C1860 510 1852 486 1840 474 L1836 500 L1846 540 Z" fill="#6d6a68"/></g>
 </g>
</svg>
<!-- I-beam cursor -->
<svg style="left:441px;top:497.6px" width="18" height="24" viewBox="440 498 18 24" fill="none" stroke-linecap="butt">
 <path d="M445.200 503.200 h2.400 q.9 0 .9 .9 v11.800 q0 .9 -.9 .9 h-2.400 M451.800 503.200 h-2.400 q-.9 0 -.9 .9 v11.800 q0 .9 .9 .9 h2.400" stroke="#fff" stroke-width="2.600"/>
 <path d="M445.200 503.200 h2.400 q.9 0 .9 .9 v11.800 q0 .9 -.9 .9 h-2.400 M451.800 503.200 h-2.400 q-.9 0 -.9 .9 v11.800 q0 .9 .9 .9 h2.400" stroke="#222" stroke-width="1.100"/>
</svg>

<!-- text -->
<span class="t" style="left:78.50px;top:83.00px;font-size:14.2px;line-height:16px;color:#474b52;transform:scaleX(0.9099);-webkit-mask-image:linear-gradient(90deg,#000 86%,transparent 100%);mask-image:linear-gradient(90deg,#000 86%,transparent 100%);">Alkaline Degreaser Formulation</span>
<span class="t" style="left:338.30px;top:83.00px;font-size:14.2px;line-height:16px;color:#1f1f1f;transform:scaleX(0.9099);-webkit-mask-image:linear-gradient(90deg,#000 86%,transparent 100%);mask-image:linear-gradient(90deg,#000 86%,transparent 100%);">Alkaline Degreaser Formulation</span>
<span class="t" style="left:171.70px;top:128.00px;font-size:17.5px;line-height:20px;color:#202124;transform:scaleX(0.8577);">demo.signalsresearch.revvitycloud.com</span>
<span class="t" style="left:434.50px;top:128.00px;font-size:17.5px;line-height:20px;color:#5c5f64;transform:scaleX(0.8822);">/elements/office-online.html?file=viewonly%3Af79e8f30-527d-4b4e-a62a-b387902988de&amp;mode=edit</span>
<span class="t" style="left:1607.60px;top:132.00px;font-size:10.5px;line-height:12px;color:#ffffff;transform:scaleX(0.9143);">T</span>
<span class="t" style="left:73.00px;top:182.00px;font-size:16.7px;line-height:19px;color:#242424;transform:scaleX(0.9084);">Alkaline Degreaser Formulation Protocol</span>
<span class="t" style="left:604.50px;top:183.00px;font-size:16px;line-height:17px;color:#616161;transform:scaleX(0.9465);">Search for tools, help, and more (Alt + Q)</span>
<span class="t" style="left:1527.00px;top:182.00px;font-size:16.5px;line-height:18px;color:#242424;transform:scaleX(0.9203);">tiao.xie@revvity.com</span>
<span class="t" style="left:22.10px;top:226.00px;font-size:15.7px;line-height:17px;color:#424242;transform:scaleX(0.8960);">File</span>
<span class="t" style="left:133.04px;top:226.00px;font-size:15.7px;line-height:17px;color:#424242;transform:scaleX(0.9646);">Insert</span>
<span class="t" style="left:196.54px;top:226.00px;font-size:15.7px;line-height:17px;color:#424242;transform:scaleX(0.9627);">Layout</span>
<span class="t" style="left:267.59px;top:226.00px;font-size:15.7px;line-height:17px;color:#424242;transform:scaleX(0.9133);">References</span>
<span class="t" style="left:366.08px;top:226.00px;font-size:15.7px;line-height:17px;color:#424242;transform:scaleX(0.9196);">Review</span>
<span class="t" style="left:439.50px;top:226.00px;font-size:15.7px;line-height:17px;color:#424242;transform:scaleX(0.9451);">View</span>
<span class="t" style="left:496.02px;top:226.00px;font-size:15.7px;line-height:17px;color:#424242;transform:scaleX(0.9829);">Help</span>
<span class="t" style="left:66.53px;top:226.00px;font-size:15.7px;line-height:17px;color:#1f1f1f;font-weight:700;transform:scaleX(0.9683);">Home</span>
<span class="t" style="left:1486.00px;top:226.00px;font-size:13.5px;line-height:15px;color:#242424;transform:scaleX(0.9463);">Comments</span>
<span class="t" style="left:1597.71px;top:226.00px;font-size:13.5px;line-height:15px;color:#242424;transform:scaleX(0.9882);">Editing</span>
<span class="t" style="left:165.00px;top:269.00px;font-size:16.5px;line-height:18px;color:#242424;transform:scaleX(0.8995);">Calibri (Headin...</span>
<span class="t" style="left:310.00px;top:269.00px;font-size:16.5px;line-height:18px;color:#242424;transform:scaleX(0.8803);">26</span>
<span class="t" style="left:1313.52px;top:270.00px;font-size:15.5px;line-height:17px;color:#242424;transform:scaleX(0.9814);">Find</span>
<span class="t" style="left:1126.00px;top:259.00px;font-size:33.5px;line-height:37px;color:#1f3864;transform:scaleX(1.0535);">Title</span>
<span class="t" style="left:447.24px;top:267.00px;font-size:21px;line-height:23px;color:#2f2f2f;font-weight:700;transform:scaleX(0.7571);">B</span>
<span class="t" style="left:573.71px;top:431.00px;font-size:33.2px;line-height:37px;color:#f00c0c;transform:scaleX(1.0448);">Protocols for Developing Alkaline</span>
<span class="t" style="left:646.21px;top:477.00px;font-size:33.2px;line-height:37px;color:#f00c0c;transform:scaleX(1.0439);">Degreaser Formulation</span>
<span class="t" style="left:513.12px;top:557.00px;font-size:16.8px;line-height:19px;color:#365f91;font-weight:700;transform:scaleX(1.0805);">Required Materials</span>
<span class="t" style="left:514.20px;top:768.00px;font-size:16.8px;line-height:19px;color:#365f91;font-weight:700;transform:scaleX(1.0355);">Safety Precautions</span>
<span class="t" style="left:513.15px;top:916.00px;font-size:16.8px;line-height:19px;color:#365f91;font-weight:700;transform:scaleX(1.0502);clip-path:inset(0 0 2px 0);">Formulation Steps</span>
<span class="t" style="left:540.30px;top:580.00px;font-size:16.6px;line-height:19px;color:#202020;font-family:'Liberation Serif',serif;transform:scaleX(1.0107);-webkit-text-stroke:.2px #222;">Alkaline agents (e.g., sodium hydroxide, potassium hydroxide)</span>
<span class="t" style="left:539.27px;top:602.00px;font-size:16.6px;line-height:19px;color:#202020;font-family:'Liberation Serif',serif;transform:scaleX(1.0284);-webkit-text-stroke:.2px #222;">Surfactants (non-ionic or anionic)</span>
<span class="t" style="left:540.30px;top:623.00px;font-size:16.6px;line-height:19px;color:#202020;font-family:'Liberation Serif',serif;transform:scaleX(0.9731);-webkit-text-stroke:.2px #222;">Chelating agents (e.g., EDTA)</span>
<span class="t" style="left:540.30px;top:645.00px;font-size:16.6px;line-height:19px;color:#202020;font-family:'Liberation Serif',serif;transform:scaleX(1.0308);-webkit-text-stroke:.2px #222;">Corrosion inhibitors</span>
<span class="t" style="left:540.30px;top:666.00px;font-size:16.6px;line-height:19px;color:#202020;font-family:'Liberation Serif',serif;transform:scaleX(1.0420);-webkit-text-stroke:.2px #222;">Water (preferably deionized)</span>
<span class="t" style="left:540.30px;top:687.00px;font-size:16.6px;line-height:19px;color:#202020;font-family:'Liberation Serif',serif;transform:scaleX(1.0266);-webkit-text-stroke:.2px #222;">Measuring equipment (pH meter, balance)</span>
<span class="t" style="left:540.30px;top:709.00px;font-size:16.6px;line-height:19px;color:#202020;font-family:'Liberation Serif',serif;transform:scaleX(1.0113);-webkit-text-stroke:.2px #222;">Mixing vessel and stirrer</span>
<span class="t" style="left:540.30px;top:792.00px;font-size:16.6px;line-height:19px;color:#202020;font-family:'Liberation Serif',serif;transform:scaleX(1.0068);-webkit-text-stroke:.2px #222;">Wear appropriate PPE: gloves, goggles, and lab coat.</span>
<span class="t" style="left:540.30px;top:814.00px;font-size:16.6px;line-height:19px;color:#202020;font-family:'Liberation Serif',serif;transform:scaleX(1.0332);-webkit-text-stroke:.2px #222;">Ensure proper ventilation in the working area.</span>
<span class="t" style="left:540.30px;top:835.00px;font-size:16.6px;line-height:19px;color:#202020;font-family:'Liberation Serif',serif;transform:scaleX(1.0208);-webkit-text-stroke:.2px #222;">Handle alkaline agents with care to avoid burns.</span>
<span class="t" style="left:540.30px;top:856.00px;font-size:16.6px;line-height:19px;color:#202020;font-family:'Liberation Serif',serif;transform:scaleX(1.0061);-webkit-text-stroke:.2px #222;">Keep neutralizing agents (e.g., dilute acid) nearby in case of spills.</span>
<span class="t" style="left:17.72px;top:940.00px;font-size:13px;line-height:15px;color:#616161;transform:scaleX(0.9775);">Page 1 of 2</span>
<span class="t" style="left:93.70px;top:940.00px;font-size:13px;line-height:15px;color:#616161;transform:scaleX(0.9805);">262 words</span>
<span class="t" style="left:162.76px;top:940.00px;font-size:13px;line-height:15px;color:#616161;transform:scaleX(0.9358);">English (U.S.)</span>
<span class="t" style="left:1417.00px;top:941.00px;font-size:12.5px;line-height:14px;color:#616161;transform:scaleX(0.9417);">100%</span>
<span class="t" style="left:1472.99px;top:941.00px;font-size:12.5px;line-height:14px;color:#616161;transform:scaleX(1.0065);">Fit</span>
<span class="t" style="left:1498.70px;top:941.00px;font-size:12.5px;line-height:14px;color:#616161;transform:scaleX(1.0257);">Give Feedback to Microsoft</span>
<span class="t" style="left:56.70px;top:967.00px;font-size:14px;line-height:16px;color:#1b1b1b;transform:scaleX(0.8570);">47°F</span>
<span class="t" style="left:56.70px;top:985.00px;font-size:14px;line-height:16px;color:#5f5f5f;transform:scaleX(0.9018);">Sunny</span>
<span class="t" style="left:518.00px;top:976.00px;font-size:17px;line-height:19px;color:#5a5a5a;transform:scaleX(0.8332);">Search</span>
<span class="t" style="left:1426.03px;top:978.00px;font-size:12.5px;line-height:14px;color:#1b1b1b;transform:scaleX(0.9738);">ENG</span>
<span class="t" style="left:1580.30px;top:968.00px;font-size:13px;line-height:15px;color:#1b1b1b;transform:scaleX(0.9667);">3:00 PM</span>
<span class="t" style="left:1560.00px;top:986.00px;font-size:13px;line-height:15px;color:#1b1b1b;transform:scaleX(1.0381);">11/24/2025</span>
<span class="t" style="left:40.00px;top:968.00px;font-size:12.5px;line-height:14px;color:#ffffff;transform:scaleX(0.7571);">5</span>
<span class="t" style="left:844.60px;top:970.00px;font-size:11.5px;line-height:12px;color:#ffffff;transform:scaleX(0.9406);">9+</span>
<span class="t" style="left:1087.20px;top:970.00px;font-size:10.5px;line-height:12px;color:#ffffff;transform:scaleX(0.8286);">T</span>
<span class="t" style="left:1173.00px;top:991.00px;font-size:6.2px;line-height:7px;color:#ffffff;font-weight:700;transform:scaleX(0.9229);">M365</span>
<span class="t" style="left:1695.00px;top:623.00px;font-size:15.5px;line-height:17px;color:#ffffff;transform:scaleX(1.0505);">Xie, Tiao</span>
<span class="t" style="left:13.00px;top:1053.00px;font-size:15.5px;line-height:17px;color:#ffffff;transform:scaleX(1.0422);">Xie, Tiao</span>
</div>
</body>
</html>
